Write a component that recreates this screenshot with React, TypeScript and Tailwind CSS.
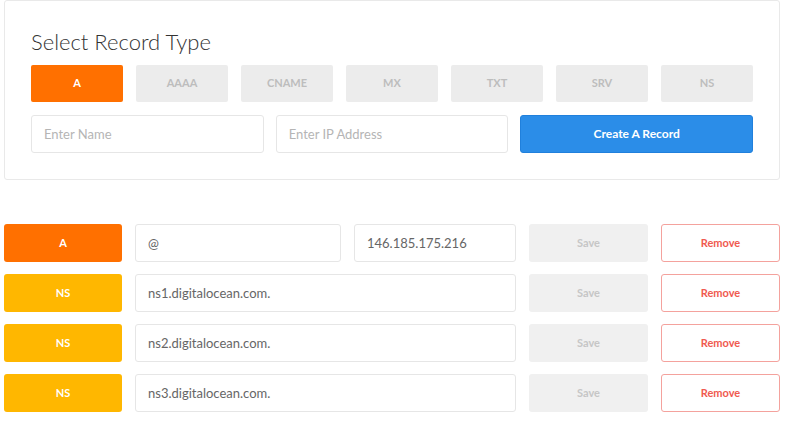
import { useState } from 'react';

const TYPES = ['A', 'AAAA', 'CNAME', 'MX', 'TXT', 'SRV', 'NS'];

interface DnsRecord {
  type: 'A' | 'NS';
  name?: string;
  value: string;
}

const RECORDS: DnsRecord[] = [
  { type: 'A', name: '@', value: '146.185.175.216' },
  { type: 'NS', value: 'ns1.digitalocean.com.' },
  { type: 'NS', value: 'ns2.digitalocean.com.' },
  { type: 'NS', value: 'ns3.digitalocean.com.' },
];

const inputCls =
  'h-[38px] w-full rounded-[3px] border border-[#e6e6e6] bg-white px-[12px] text-[13px] text-[#666] placeholder:text-[#b5b5b5] outline-none';

export default function App() {
  const [selected, setSelected] = useState('A');

  return (
    <div className="min-h-[433px] bg-white font-['Lato',sans-serif]">
      {/* ----- Create record card ----- */}
      <div className="mx-[4px] w-[776px] rounded-[3px] border border-[#e9e9e9] px-[26px] pb-[26px] pt-[27px]">
        <h2 className="text-[22px] leading-[28px] font-light text-[#333]">Select Record Type</h2>

        <div className="mt-[9px] grid grid-cols-7 gap-[13px]">
          {TYPES.map((t) => (
            <button
              key={t}
              onClick={() => setSelected(t)}
              className={
                t === selected
                  ? 'h-[37px] rounded-[2px] bg-[#ff7000] text-[11px] font-bold text-white'
                  : 'h-[37px] rounded-[2px] bg-[#ececec] text-[11px] font-bold text-[#bdbdbd]'
              }
            >
              {t}
            </button>
          ))}
        </div>

        <div className="mt-[13px] grid grid-cols-3 gap-[12px]">
          <input className={inputCls} placeholder="Enter Name" />
          <input className={inputCls} placeholder="Enter IP Address" />
          <button className="h-[38px] rounded-[3px] border border-[#2080dc] bg-[#2b8de8] text-[12px] font-bold text-white">
            Create {selected} Record
          </button>
        </div>
      </div>

      {/* ----- Existing records ----- */}
      <div className="mx-[4px] mt-[44px] flex w-[776px] flex-col gap-[12px]">
        {RECORDS.map((r, i) => (
          <div key={i} className="grid grid-cols-[118px_206px_162px_119px_119px] gap-x-[13px]">
            <div
              className={
                r.type === 'A'
                  ? 'flex h-[38px] items-center justify-center rounded-[3px] bg-[#ff7000] text-[11px] font-bold text-white'
                  : 'flex h-[38px] items-center justify-center rounded-[3px] bg-[#ffb700] text-[11px] font-bold text-white'
              }
            >
              {r.type}
            </div>
            {r.name !== undefined ? (
              <>
                <input className={inputCls} defaultValue={r.name} />
                <input className={inputCls} defaultValue={r.value} />
              </>
            ) : (
              <input className={inputCls + ' col-span-2'} defaultValue={r.value} />
            )}
            <button className="h-[38px] rounded-[3px] bg-[#f0f0f0] text-[11px] font-bold text-[#c6c6c6]">Save</button>
            <button className="h-[38px] rounded-[3px] border border-[#f4a29d] bg-white text-[11px] font-bold text-[#f05a50]">
              Remove
            </button>
          </div>
        ))}
      </div>
    </div>
  );
}
